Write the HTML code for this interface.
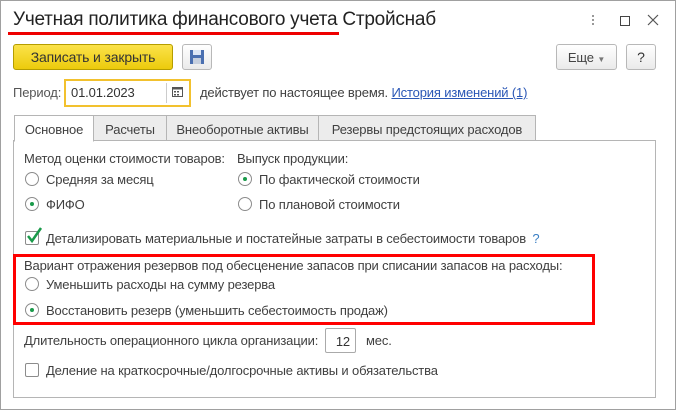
<!DOCTYPE html>
<html><head><meta charset="utf-8"><style>
*{margin:0;padding:0;box-sizing:border-box}
body{width:676px;height:410px;background:#fff;font-family:"Liberation Sans",Arial,sans-serif;font-size:13px;letter-spacing:-0.15px;color:#404040;position:relative;overflow:hidden}
.a{position:absolute;white-space:nowrap}
.win{position:absolute;left:0;top:0;width:676px;height:410px;border:1px solid #a0a0a0}
.rad{position:absolute;width:14px;height:14px;border:1px solid #8c8c8c;border-radius:50%;background:#fff}
.rad.on::after{content:"";position:absolute;left:4px;top:4px;width:4px;height:4px;border-radius:50%;background:#1a9a4a}
.cb{position:absolute;width:14px;height:14px;border:1px solid #8c8c8c;border-radius:2px;background:#fff}
.tab{position:absolute;top:115px;height:26px;border:1px solid #b5b5b5;background:#ececec;padding:6px 0 0;text-align:center;color:#404040}
.btn{position:absolute;height:26px;border:1px solid #b8b8b8;border-radius:3px;background:linear-gradient(#fff,#eaeaea)}
</style></head><body>
<div class="win"></div>
<div class="a" style="left:13px;top:9px;font-size:19px;letter-spacing:-0.24px;color:#222">Учетная политика финансового учета Стройснаб</div>
<div class="a" style="left:8px;top:32px;width:331px;height:3px;background:#e00"></div>
<div class="a" style="left:592px;top:15px;width:2px;height:2px;background:#999;box-shadow:0 4px #999,0 8px #999"></div>
<div class="a" style="left:620px;top:16px;width:10px;height:10px;border:1px solid #444"></div>
<svg class="a" style="left:647px;top:14px" width="12" height="12"><path d="M1 1L11 11M11 1L1 11" stroke="#555" stroke-width="1.2"/></svg>
<div class="a" style="left:13px;top:44px;width:160px;height:26px;border:1px solid #b59d00;border-radius:3px;background:linear-gradient(#fbe24a,#eccb0c);color:#333;font-size:14px;text-align:center;padding-top:4px">Записать и закрыть</div>
<div class="btn" style="left:182px;top:44px;width:30px"><svg width="16" height="16" style="position:absolute;left:6px;top:4px"><rect x="1" y="1" width="14" height="14" fill="#4a6fb0"/><rect x="4" y="1" width="8" height="5" fill="#dde6f5"/><rect x="4" y="9" width="8" height="6" fill="#c6cfde"/></svg></div>
<div class="btn" style="left:556px;top:44px;width:61px;text-align:center;padding-top:5px;color:#444">Еще <span style="font-size:8px;color:#777">▼</span></div>
<div class="btn" style="left:626px;top:44px;width:30px;text-align:center;padding-top:4px;color:#333;font-size:14px">?</div>
<div class="a" style="left:13px;top:85px;color:#555">Период:</div>
<div class="a" style="left:64px;top:79px;width:127px;height:28px;border:2px solid #f2c12e;background:#fff"></div>
<div class="a" style="left:71px;top:85px;color:#333">01.01.2023</div>
<div class="a" style="left:166px;top:83px;width:1px;height:20px;background:#ccc"></div>
<svg class="a" style="left:172px;top:86px" width="11" height="11"><rect x="0.5" y="1.5" width="10" height="9" fill="none" stroke="#555"/><rect x="0.5" y="1.5" width="10" height="2" fill="#555"/><rect x="2" y="5" width="2" height="1.5" fill="#555"/><rect x="5" y="5" width="2" height="1.5" fill="#555"/><rect x="2" y="8" width="2" height="1.5" fill="#555"/><rect x="5" y="8" width="2" height="1.5" fill="#555"/></svg>
<div class="a" style="left:200px;top:85px;color:#404040">действует по настоящее время. <span style="color:#2a57b6;text-decoration:underline">История изменений (1)</span></div>
<div class="a" style="left:13px;top:140px;width:643px;height:258px;border:1px solid #b5b5b5"></div>
<div class="tab" style="left:14px;width:80px;background:#fff;border-bottom-color:#fff;height:27px">Основное</div>
<div class="tab" style="left:93px;width:74px">Расчеты</div>
<div class="tab" style="left:166px;width:153px">Внеоборотные активы</div>
<div class="tab" style="left:318px;width:218px">Резервы предстоящих расходов</div>
<div class="a" style="left:24px;top:151px">Метод оценки стоимости товаров:</div>
<div class="a" style="left:237px;top:151px">Выпуск продукции:</div>
<div class="rad" style="left:25px;top:172px"></div><div class="a" style="left:46px;top:172px">Средняя за месяц</div>
<div class="rad on" style="left:25px;top:197px"></div><div class="a" style="left:46px;top:197px">ФИФО</div>
<div class="rad on" style="left:238px;top:172px"></div><div class="a" style="left:259px;top:172px">По фактической стоимости</div>
<div class="rad" style="left:238px;top:197px"></div><div class="a" style="left:259px;top:197px">По плановой стоимости</div>
<div class="cb" style="left:25px;top:231px"></div>
<svg class="a" style="left:25px;top:226px" width="18" height="18"><path d="M3 10 L7 15 L16 2" fill="none" stroke="#1a9a4a" stroke-width="2.5"/></svg>
<div class="a" style="left:46px;top:231px">Детализировать материальные и постатейные затраты в себестоимости товаров <span style="color:#3a7fc4;margin-left:3px">?</span></div>
<div class="a" style="left:13px;top:254px;width:582px;height:71px;border:3px solid #f00"></div>
<div class="a" style="left:24px;top:258px">Вариант отражения резервов под обесценение запасов при списании запасов на расходы:</div>
<div class="rad" style="left:25px;top:277px"></div><div class="a" style="left:46px;top:277px">Уменьшить расходы на сумму резерва</div>
<div class="rad on" style="left:25px;top:303px"></div><div class="a" style="left:46px;top:303px">Восстановить резерв (уменьшить себестоимость продаж)</div>
<div class="a" style="left:24px;top:333px">Длительность операционного цикла организации:</div>
<div class="a" style="left:325px;top:328px;width:31px;height:25px;border:1px solid #aaa;border-radius:2px;text-align:right;padding:5px 5px 0 0;color:#333">12</div>
<div class="a" style="left:366px;top:333px">мес.</div>
<div class="cb" style="left:25px;top:363px"></div><div class="a" style="left:46px;top:363px">Деление на краткосрочные/долгосрочные активы и обязательства</div>
</body></html>
